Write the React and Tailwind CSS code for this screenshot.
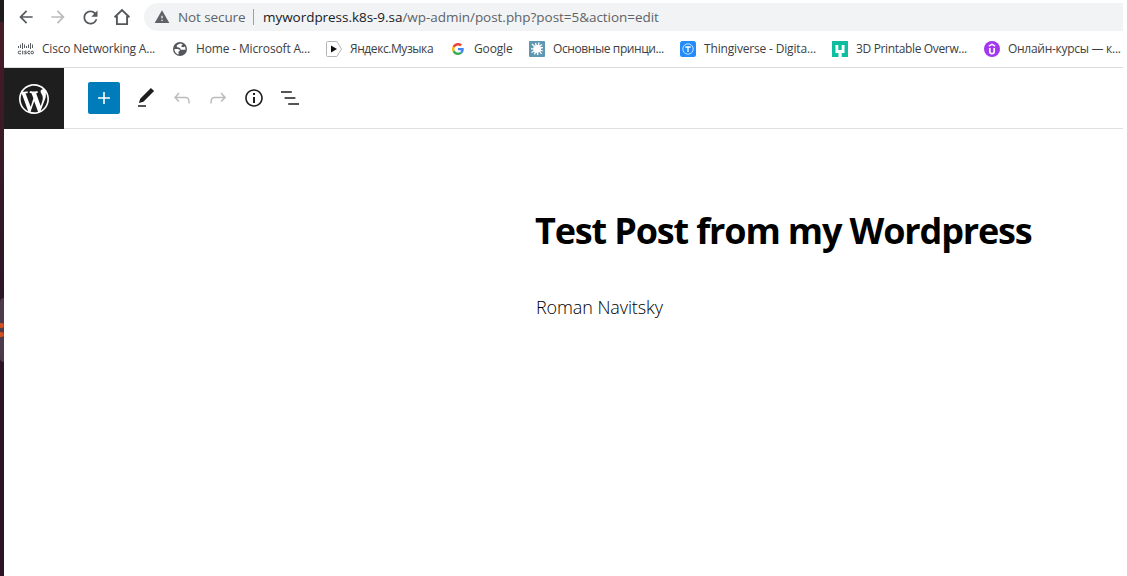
import React from "react";
import { MdRefresh, MdWarning, MdArrowBack, MdArrowForward } from "react-icons/md";

function CiscoIcon() {
  return (
    <svg width="16" height="16" viewBox="0 0 16 16" className="shrink-0 overflow-visible">
      <path d="M.5 5v2M2.5 3.5V7M4.500 2v6M6.500 3.500V7M8.500 5v2M10.500 3.500V7M12.500 2v6M14.500 3.500V7" stroke="#5b5e63" strokeWidth="1" />
      <path d="M3 10.200H1.500a1.300 1.300 0 0 0 0 2.600H3M4.700 9.700v3.600M8.500 10.200H7.200c-.9 0-.9 1.300 0 1.300h.6c.9 0 .9 1.300 0 1.300H6.300M12 10.200h-1a1.300 1.300 0 0 0 0 2.600h1" fill="none" stroke="#4a4d52" strokeWidth="1" />
      <circle cx="14.200" cy="11.500" r="1.300" fill="none" stroke="#4a4d52" />
    </svg>
  );
}

function GlobeIcon() {
  return (
    <svg width="16" height="16" viewBox="0 0 16 16" className="shrink-0">
      <circle cx="8" cy="8" r="7" fill="#53565b" />
      <path d="M9 2.600c-1.600 0-2.700.9-3.600 1.500-.9.700-.9 1.700 0 2.200.8.400 1.900.2 2.600.7.700.6.200 1.400 1.100 1.700h4.300c.3-1.300 0-2.400-.6-3.300l-1.700.9-1.900-.5.400-1.400 1.200-.7z" fill="#fff" />
      <path d="M2.400 8h3.400c1.300 0 2 .8 2.100 1.700l-1.500 1 .3 2.900c-2.300-.5-4.300-2.500-4.300-5.600z" fill="#fff" />
    </svg>
  );
}

function PlayIcon() {
  return (
    <svg width="16" height="16" viewBox="0 0 16 16" className="shrink-0">
      <path d="M1.500.5h9.300L15.500 8l-4.700 7.500H1.500a1 1 0 0 1-1-1v-13a1 1 0 0 1 1-1z" fill="#fff" stroke="#b5b5b5" />
      <path d="M5 4.500v7L11 8z" fill="#111" />
    </svg>
  );
}

function GoogleIcon() {
  return (
    <svg width="16" height="16" viewBox="-8 -8 64 64" className="shrink-0">
      <path fill="#EA4335" d="M24 9.500c3.540 0 6.710 1.220 9.210 3.600l6.850-6.850C35.900 2.380 30.470 0 24 0 14.620 0 6.510 5.380 2.560 13.220l7.980 6.190C12.430 13.720 17.740 9.500 24 9.500z" />
      <path fill="#4285F4" d="M46.980 24.550c0-1.570-.15-3.090-.38-4.550H24v9.020h12.940c-.58 2.960-2.260 5.480-4.780 7.180l7.730 6c4.510-4.180 7.090-10.360 7.090-17.650z" />
      <path fill="#FBBC05" d="M10.530 28.590c-.48-1.450-.76-2.990-.76-4.590s.27-3.140.76-4.590l-7.980-6.190C.92 16.460 0 20.120 0 24c0 3.880.92 7.540 2.560 10.780l7.970-6.190z" />
      <path fill="#34A853" d="M24 48c6.480 0 11.930-2.130 15.890-5.810l-7.730-6c-2.150 1.450-4.920 2.300-8.160 2.300-6.260 0-11.570-4.220-13.470-9.910l-7.980 6.190C6.510 42.620 14.620 48 24 48z" />
    </svg>
  );
}

function SplatIcon() {
  return (
    <svg width="16" height="16" viewBox="0 0 16 16" className="shrink-0">
      <rect width="16" height="16" rx="1" fill="#5d97b1" />
      <circle cx="8.200" cy="7.800" r="3.900" fill="#fff" />
      <path d="M3 3l3 3M6.500 2l.8 3M10 1.500L9.300 5M13 3.500l-3 2M14 6.500l-3 .6M13.800 10l-3-1M12.500 13l-2-3M8.800 14l-.5-3M5.500 13.500l1-3M2.500 11.500l3-1.800M2 7.800h3" stroke="#fff" strokeWidth="1.300" />
    </svg>
  );
}

function ThingIcon() {
  return (
    <svg width="16" height="16" viewBox="0 0 16 16" className="shrink-0">
      <rect width="16" height="16" rx="2.500" fill="#248bfb" />
      <circle cx="8" cy="8" r="5.200" fill="none" stroke="#d5eaff" strokeWidth=".9" />
      <path d="M5.300 6h5.400M8 6v5" stroke="#fff" strokeWidth="1.300" />
    </svg>
  );
}

function ForkIcon() {
  return (
    <svg width="16" height="16" viewBox="0 0 16 16" className="shrink-0">
      <rect width="16" height="16" fill="#0dbf9f" />
      <path d="M3.500 4h2.800v5h3.400V4h2.800v8H9.700v4H6.500v-4h-3z" fill="#fff" />
    </svg>
  );
}

function UdemyIcon() {
  return (
    <svg width="16" height="16" viewBox="0 0 16 16" className="shrink-0">
      <circle cx="8" cy="8" r="8" fill="#a435f0" />
      <path d="M4.800 5.200L8 3.300l3.200 1.900" fill="none" stroke="#fff" strokeWidth="1.400" />
      <path d="M5.800 7v3.500a2.200 2.200 0 0 0 4.400 0V7" fill="none" stroke="#fff" strokeWidth="1.700" />
    </svg>
  );
}

const bookmarks = [
  { icon: <CiscoIcon />, label: "Cisco Networking A...", cls: "w-[154px] tracking-[-0.2px]" },
  { icon: <GlobeIcon />, label: "Home - Microsoft A...", cls: "w-[154px] tracking-[-0.15px]" },
  { icon: <PlayIcon />, label: "Яндекс.Музыка", cls: "w-[124px] tracking-[-0.42px]" },
  { icon: <GoogleIcon />, label: "Google", cls: "w-[79px] tracking-[-0.15px]" },
  { icon: <SplatIcon />, label: "Основные принци...", cls: "w-[151px] tracking-[-0.4px]" },
  { icon: <ThingIcon />, label: "Thingiverse - Digita...", cls: "w-[152px] tracking-[-0.17px]" },
  { icon: <ForkIcon />, label: "3D Printable Overw...", cls: "w-[152px] tracking-[-0.35px]" },
  { icon: <UdemyIcon />, label: "Онлайн-курсы — к...", cls: "w-[139px] tracking-[-0.28px]" },
];

const tools = [
  ["Edit", "M20.100 5.100L16.900 2 6.200 12.700l-1.300 4.400 4.500-1.300L20.100 5.100zM4 20.800h8v-1.500H4v1.500z", "fill-[#1e1e1e]"],
  ["Undo", "M18.300 11.700c-.6-.6-1.400-.9-2.300-.9H6.700l2.900-3.300-1.100-1-4.500 5L8.500 16l1-1-2.700-2.700H16c.5 0 .9.2 1.300.5 1 1 1 3.400 1 4.500v.3h1.500v-.2c0-1.500 0-4.300-1.500-5.700z", "fill-[#bcbcbc]"],
  ["Redo", "M15.600 6.500l-1.100 1 2.900 3.300H8c-.9 0-1.700.3-2.300.9-1.400 1.500-1.400 4.200-1.400 5.600v.2h1.500v-.3c0-1.100 0-3.500 1-4.500.3-.3.7-.5 1.300-.5h9.200L14.500 15l1.100 1.100 4.600-4.600-4.600-5z", "fill-[#bcbcbc]"],
  ["Details", "M12 3.200c-4.800 0-8.800 3.900-8.800 8.800 0 4.800 3.900 8.800 8.800 8.800 4.800 0 8.800-3.900 8.800-8.800 0-4.800-4-8.800-8.800-8.800zm0 16c-4 0-7.200-3.300-7.200-7.200C4.800 8 8 4.800 12 4.800s7.200 3.300 7.200 7.200c0 4-3.200 7.200-7.200 7.200zM11 17h2v-6h-2v6zm0-8h2V7h-2v2z", "fill-[#1e1e1e]"],
  ["List view", "M13.800 5.200H3v1.500h10.800V5.200zm-3.600 12v1.500H21v-1.500H10.200zm7.200-6H6.600v1.500h10.800v-1.500z", "fill-[#1e1e1e]"],
];

function Launcher() {
  return (
    <div className="flex w-full flex-col bg-[#2b1426]">
      <div className="h-[22px] bg-[#1f1a1a]" />
      <div className="h-[276px] bg-linear-to-b from-[#451c25] to-[#2b1628]" />
      <div className="flex h-16 flex-col gap-1 rounded-l-sm bg-[#4b3a4a] pt-[25px]">
        <div className="h-[5px] rounded-r-sm bg-[#d2501f]" />
        <div className="h-[5px] rounded-r-sm bg-[#d2501f]" />
      </div>
    </div>
  );
}

function AddressRow() {
  return (
    <div className="flex h-[34px] items-center pl-3">
      <MdArrowBack size={20} color="#55585d" className="mr-3" />
      <MdArrowForward size={20} color="#babcbe" className="mr-3" />
      <MdRefresh size={21} color="#55585d" className="mr-2.5" />
      <svg width="22" height="22" viewBox="0 0 22 22" className="mr-[11px]">
        <path d="M3.600 11.300L11 4l7.400 7.300M5.900 10v8.100h10.200V10" fill="none" stroke="#55585d" strokeWidth="1.900" />
      </svg>
      <div className="flex h-7 flex-1 items-center rounded-l-full bg-[#f1f3f4] pl-2.5 text-[13.5px] tracking-[-0.04px]">
        <MdWarning size={16} color="#5f6368" />
        <span className="ml-2 w-[67px] whitespace-nowrap tracking-[-0.1px] text-[#5f6368]">Not secure</span>
        <span className="mx-2 h-4 w-px bg-[#9aa0a6]" />
        <span className="ml-px whitespace-nowrap text-[#5f6368]">
          <span className="text-[#202124]">mywordpress.k8s-9.sa</span>/wp-admin/post.php?post=5&amp;action=edit
        </span>
      </div>
    </div>
  );
}

export default function App() {
  return (
    <div className="flex h-[576px] w-[1127px] overflow-hidden bg-white font-['Open_Sans','Noto_Sans',sans-serif]">
      <div className="flex w-1 shrink-0">
        <Launcher />
      </div>
      <div className="flex w-[1119px] flex-col">
        <AddressRow />
        <div className="flex h-[34px] items-center border-b border-[#dadce0] pb-1 pl-3.5 text-[12px] text-[#3c4043]">
          {bookmarks.map((b) => (
            <div key={b.label} className={"flex shrink-0 items-center gap-2 whitespace-nowrap " + b.cls}>
              {b.icon}
              <span>{b.label}</span>
            </div>
          ))}
        </div>
        <header className="flex h-[61px]">
          <div className="flex w-[60px] items-center justify-center bg-[#1e1e1e]">
            <svg width="36" height="36" viewBox="-2 -2 24 24" fill="#fff">
              <path d="M20 10c0-5.510-4.490-10-10-10C4.480 0 0 4.490 0 10c0 5.520 4.480 10 10 10 5.510 0 10-4.480 10-10zM7.780 15.370L4.370 6.220c.55-.02 1.170-.08 1.170-.08.5-.06.44-1.130-.06-1.110 0 0-1.450.11-2.370.11-.18 0-.37 0-.58-.01C4.120 2.690 6.870 1.110 10 1.110c2.330 0 4.450.87 6.050 2.340-.68-.11-1.650.39-1.650 1.580 0 .74.45 1.360.9 2.100.35.61.55 1.360.55 2.460 0 1.490-1.400 5-1.400 5l-3.030-8.370c.54-.02.82-.17.82-.17.5-.05.44-1.250-.06-1.220 0 0-1.440.12-2.380.12-.87 0-2.330-.12-2.330-.12-.5-.03-.56 1.200-.06 1.220l.92.08 1.260 3.410zM17.410 10c.24-.64.74-1.870.43-4.250.7 1.290 1.050 2.710 1.050 4.250 0 3.290-1.730 6.240-4.400 7.780.97-2.590 1.940-5.200 2.920-7.780zM6.100 18.090C3.120 16.650 1.110 13.530 1.110 10c0-1.300.23-2.480.72-3.590C3.250 10.300 4.670 14.200 6.100 18.090zm4.030-6.630l2.580 6.980c-.86.29-1.760.45-2.710.45-.79 0-1.570-.11-2.290-.33.81-2.380 1.620-4.740 2.420-7.100z" />
            </svg>
          </div>
          <div className="flex flex-1 items-center border-b border-[#e0e0e0] pl-6">
            <button className="mr-3.5 flex size-8 items-center justify-center rounded-[2px] bg-[#007cba]" aria-label="Add block">
              <svg width="24" height="24" viewBox="0 0 24 24" fill="#fff">
                <path d="M18 11.200h-5.200V6h-1.600v5.200H6v1.600h5.200V18h1.600v-5.200H18z" />
              </svg>
            </button>
            <div className="flex gap-3">
              {tools.map(([name, d, cls]) => (
                <button key={name} aria-label={name}>
                  <svg width="24" height="24" viewBox="0 0 24 24" className={cls}>
                    <path d={d} />
                  </svg>
                </button>
              ))}
            </div>
          </div>
        </header>
        <main className="flex flex-col pt-[76px] pl-[531px] text-black">
          <h1 className="whitespace-nowrap text-[36px] leading-[52px] font-bold tracking-[-1.15px]">Test Post from my Wordpress</h1>
          <p className="mt-[35px] pl-px whitespace-nowrap text-[18px] leading-[30px] font-light tracking-[-0.1px]">Roman Navitsky</p>
        </main>
      </div>
    </div>
  );
}
